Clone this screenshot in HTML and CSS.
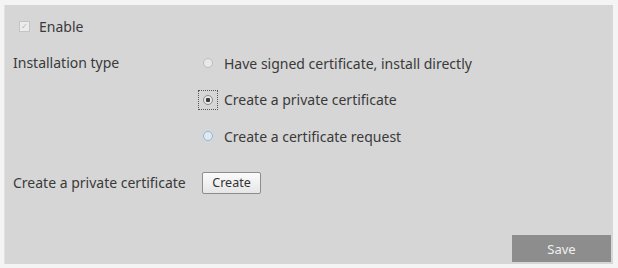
FILE: index.html
```html
<!DOCTYPE html>
<html>
<head>
<meta charset="utf-8">
<link rel="stylesheet" href="styles.css">
</head>
<body>
<div class="panel">
  <div class="enable-row">
    <span class="checkbox"><span class="tick">✓</span></span>
    <span class="label">Enable</span>
  </div>
  <div class="install-row">
    <div class="field-label">Installation type</div>
    <div class="options">
      <div class="option"><span class="radio-wrap"><span class="radio"></span></span><span class="label">Have signed certificate, install directly</span></div>
      <div class="option"><span class="radio-wrap focused"><span class="radio checked"></span></span><span class="label">Create a private certificate</span></div>
      <div class="option"><span class="radio-wrap"><span class="radio blue"></span></span><span class="label">Create a certificate request</span></div>
    </div>
  </div>
  <div class="create-row">
    <div class="field-label">Create a private certificate</div>
    <button class="btn">Create</button>
  </div>
  <div class="footer">
    <button class="save">Save</button>
  </div>
</div>
</body>
</html>
```
FILE: styles.css
```css
html, body {
  margin: 0;
  padding: 0;
  background: #f4f4f4;
}
body {
  width: 618px;
  height: 268px;
  overflow: hidden;
  font-family: "Noto Sans", "Open Sans", sans-serif;
  font-size: 14px;
  color: #3a3a3a;
}
.panel {
  margin: 5px 5px 4px 4px;
  height: 259px;
  box-sizing: border-box;
  background: #d6d6d6;
  border-left: 1px solid #e2e2e2;
  display: flex;
  flex-direction: column;
  padding: 11px 2px 2px 8px;
}
.enable-row {
  height: 20px;
  display: flex;
  align-items: center;
  padding-left: 6px;
}
.checkbox {
  width: 9px;
  height: 9px;
  border: 1px solid #c4c4c4;
  background: #ececec;
  display: flex;
  align-items: center;
  justify-content: center;
  margin-right: 9px;
}
.tick {
  font-size: 8px;
  color: #b8b8b8;
  line-height: 1;
}
.install-row {
  display: flex;
  margin-top: 9px;
}
.field-label {
  width: 183px;
  flex: none;
}
.install-row .field-label {
  height: 36.5px;
  line-height: 36.5px;
}
.options {
  display: flex;
  flex-direction: column;
}
.option {
  height: 36.5px;
  display: flex;
  align-items: center;
}
.radio-wrap {
  width: 20px;
  height: 20px;
  box-sizing: border-box;
  display: flex;
  align-items: center;
  justify-content: center;
  margin-left: 2px;
  margin-right: 6px;
}
.radio-wrap.focused {
  border: 1px dotted #555;
}
.radio {
  width: 8px;
  height: 8px;
  border-radius: 50%;
  border: 1px solid #bdbdbd;
  background: #e8e8e8;
}
.radio.blue {
  border-color: #8fb6d6;
  background: #dfe9f1;
}
.radio.checked {
  border-color: #8a8a8a;
  background: radial-gradient(circle, #3a3a3a 0 2px, #e8e8e8 2.5px);
}
.create-row {
  display: flex;
  align-items: center;
  margin-top: 17px;
  height: 22px;
}
.create-row .field-label {
  width: 189px;
}
.btn {
  font-family: inherit;
  font-size: 12.5px;
  color: #333;
  height: 22px;
  width: 59px;
  padding: 0;
  border: 1px solid #8d8d8d;
  border-radius: 2px;
  background: linear-gradient(#fbfbfb, #e6e6e6);
}
.footer {
  margin-top: auto;
  display: flex;
  justify-content: flex-end;
}
.save {
  width: 99px;
  height: 27px;
  border: none;
  background: #8d8d8d;
  color: #f0f0f0;
  font-family: inherit;
  font-size: 13px;
  padding: 0;
}
```
